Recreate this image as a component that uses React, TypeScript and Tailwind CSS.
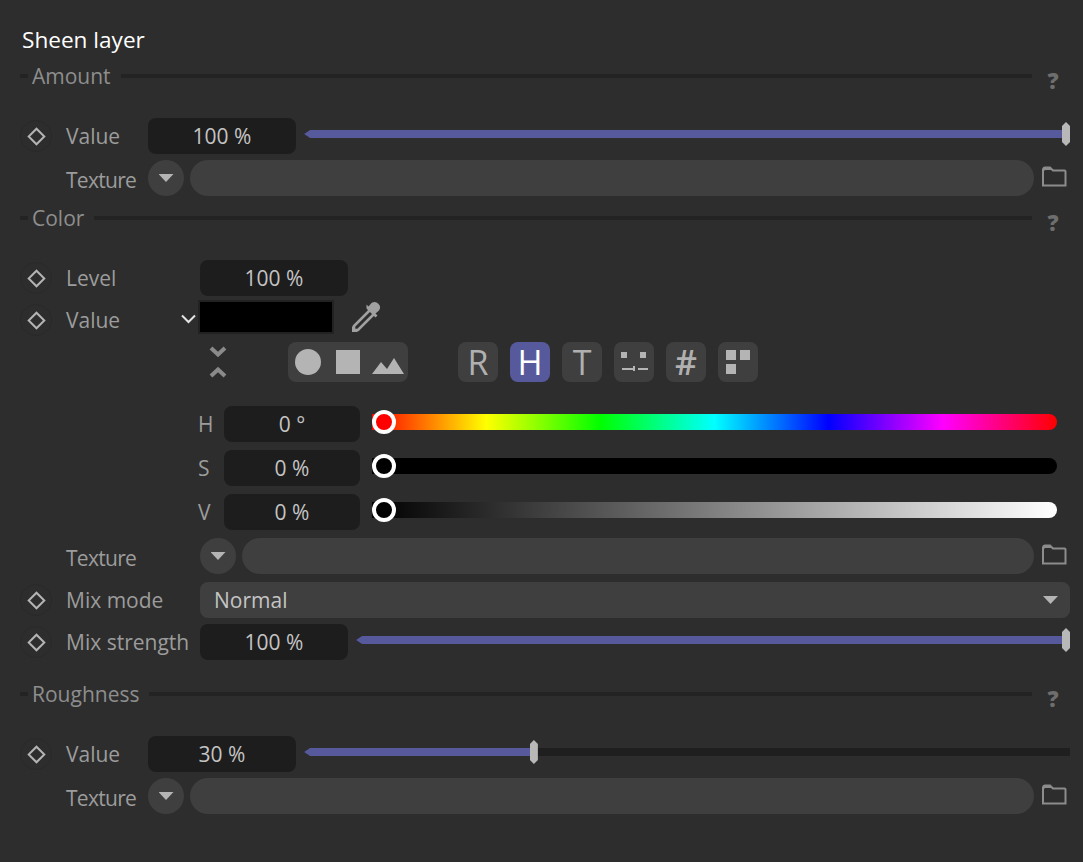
import type { ReactNode } from "react";

const font = { fontFamily: '"Open Sans", "Noto Sans", sans-serif' };

function Keyframe() {
  return (
    <div className="w-8 h-8 shrink-0 rounded-full border border-[#292929] flex items-center justify-center">
      <div className="w-[13px] h-[13px] rotate-45 border-2 border-[#b4b4b4]" />
    </div>
  );
}

function Folder() {
  return (
    <svg width="26" height="22" viewBox="0 0 26 22" className="shrink-0 ml-[7px]" fill="none">
      <path d="M2 20.5V4.500a2 2 0 0 1 2-2h5l3 3h11.500a1 1 0 0 1 1 1v14z" stroke="#8c8c8c" strokeWidth="2" />
      <path d="M2 7V4a2 2 0 0 1 2-2h5l3 3H4z" fill="#8c8c8c" />
    </svg>
  );
}

function Arrow() {
  return <div className="w-[15px] h-[8px] bg-[#b4b4b4] [clip-path:polygon(0_0,100%_0,50%_100%)]" />;
}

function Field({ value, w = "w-[148px]" }: { value: string; w?: string }) {
  return (
    <div className={"h-9 shrink-0 rounded-lg bg-[#1d1d1d] flex items-center justify-center text-[#c4c4c4] " + w}>
      {value}
    </div>
  );
}

function ValueSlider({ pct }: { pct: number }) {
  const left = `calc((100% - 8px) * ${pct / 100})`;
  return (
    <div className="relative flex-1 ml-2 -mt-1 h-2">
      <div className="h-full bg-[#1f1f1f] [clip-path:polygon(0_50%,6px_0,100%_0,100%_100%,6px_100%)]">
        <div className="h-full bg-[#565a9c]" style={{ width: left }} />
      </div>
      <div
        className="absolute top-[-8px] w-2 h-6 bg-[#b8b8b8] [clip-path:polygon(50%_0,100%_4px,100%_20px,50%_100%,0_20px,0_4px)]"
        style={{ left }}
      />
    </div>
  );
}

function Section({ title, className }: { title: string; className?: string }) {
  return (
    <div className={"h-7 flex items-center pr-[7px] " + (className ?? "")}>
      <div className="w-2 h-1 bg-[#232323]" />
      <span className="ml-1 mr-2.5 text-[#8e8e8e]">{title}</span>
      <div className="flex-1 h-1 bg-[#232323] mr-[11px]" />
      <span className="w-5 text-center mt-2 text-[#6e6e6e] font-extrabold text-[22px] leading-none">?</span>
    </div>
  );
}

function Row({ keyed, label, w, children, className }: { keyed?: boolean; label: string; w: string; children: ReactNode; className?: string }) {
  return (
    <div className={"h-9 flex items-center " + (className ?? "")}>
      <div className="w-8 shrink-0 flex justify-center">{keyed && <Keyframe />}</div>
      <span className={"ml-3.5 shrink-0 text-[#9c9c9c] " + w}>{label}</span>
      {children}
    </div>
  );
}

function TextureRow({ w, className }: { w: string; className?: string }) {
  return (
    <Row label="Texture" w={w + " mt-1 tracking-[-0.7px]"} className={className}>
      <div className="w-9 h-9 shrink-0 rounded-full bg-[#3f3f3f] flex items-center justify-center">
        <Arrow />
      </div>
      <div className="flex-1 h-9 ml-1.5 rounded-full bg-[#3f3f3f]" />
      <div className="-mt-1 mr-[3px]">
        <Folder />
      </div>
    </Row>
  );
}

function ToolButton({ active, children }: { active?: boolean; children: ReactNode }) {
  return (
    <div
      className={
        "w-10 h-10 rounded-lg flex items-center justify-center text-[34px] leading-none " +
        (active ? "bg-[#565a9c] text-white" : "bg-[#3f3f3f] text-[#b0b0b0]")
      }
    >
      {children}
    </div>
  );
}

function ColorBar({ letter, value, gradient, thumb }: { letter: string; value: string; gradient: string; thumb: string }) {
  return (
    <div className="h-9 flex items-center">
      <span className="w-[26px] text-[#9c9c9c]">{letter}</span>
      <Field value={value} w="w-[136px]" />
      <div className={"relative h-4 w-[685px] ml-3 rounded-r-full -mt-1 " + gradient}>
        <div className={"absolute left-0 top-[-4px] w-6 h-6 rounded-full border-4 border-white " + thumb} />
      </div>
    </div>
  );
}

export default function App() {
  return (
    <div style={font} className="w-[1083px] h-[862px] overflow-hidden bg-[#2d2d2d] pl-5 pr-[13px] pt-[26px] text-[21px] leading-7">
      <div className="h-7 pl-0.5 text-white text-[22.600px]">Sheen layer</div>

      <Section title="Amount" className="mt-2" />
      <Row keyed label="Value" w="w-[82px]" className="mt-7">
        <Field value="100 %" />
        <ValueSlider pct={100} />
      </Row>
      <TextureRow w="w-[82px]" className="mt-1.5" />

      <Section title="Color" className="mt-2" />
      <Row keyed label="Level" w="w-[134px]" className="mt-7">
        <Field value="100 %" />
      </Row>
      <Row keyed label="Value" w="w-[112px]" className="mt-1.5">
        <svg width="15" height="10" viewBox="0 0 15 10" fill="none" className="ml-[3px] mr-[2px] -mt-0.5 shrink-0">
          <path d="M1 1.500l6.500 6.500 6.500-6.500" stroke="#e4e4e4" strokeWidth="2" />
        </svg>
        <div className="w-[136px] h-[34px] -mt-1.5 border-2 border-[#222] bg-black shrink-0" />
        <svg width="32" height="32" viewBox="0 0 32 32" className="ml-[17px] -mt-1.5 shrink-0" fill="none">
          <path d="M19 9L3 25v4h4L23 13" stroke="#a0a0a0" strokeWidth="2.600" />
          <path d="M1 31v-6l6 6z" fill="#a0a0a0" />
          <path d="M15.500 7.500l9 9 2-2-2-2 3.500-3a5.400 5.400 0 0 0-7.500-7.500l-3 3.500-2-2z" fill="#a0a0a0" />
        </svg>
      </Row>

      <div className="h-10 mt-1 flex items-center">
        <svg width="20" height="34" viewBox="0 0 20 34" className="ml-[188px] shrink-0" fill="none" stroke="#8a8a8a" strokeWidth="4">
          <path d="M3 3l7 6.500 7-6.500" />
          <path d="M3 31l7-6.500 7 6.500" />
        </svg>
        <div className="w-[120px] h-10 ml-[60px] rounded-lg bg-[#3f3f3f] flex items-center shrink-0">
          <div className="w-[26px] h-[26px] ml-[7px] rounded-full bg-[#b4b4b4]" />
          <div className="w-6 h-6 ml-[15px] bg-[#b4b4b4]" />
          <svg width="32" height="16" viewBox="0 0 32 16" className="ml-3 mt-2 shrink-0">
            <path d="M0 16L9 4l6 7 7-11 10 16z" fill="#b4b4b4" />
          </svg>
        </div>
        <div className="flex gap-3 ml-[50px]">
          <ToolButton>R</ToolButton>
          <ToolButton active>H</ToolButton>
          <ToolButton>T</ToolButton>
          <ToolButton>
            <svg width="32" height="24" viewBox="0 0 32 24" fill="#b4b4b4">
              <rect x="3" y="2" width="6" height="6" />
              <rect x="22" y="2" width="6" height="6" />
              <rect x="4" y="18" width="11" height="2" />
              <rect x="15" y="16" width="2" height="5" />
              <rect x="20" y="18" width="10" height="2" />
            </svg>
          </ToolButton>
          <ToolButton>
            <span className="font-semibold">#</span>
          </ToolButton>
          <ToolButton>
            <svg width="24" height="24" viewBox="0 0 24 24" fill="#b4b4b4">
              <rect width="10" height="10" />
              <rect x="14" width="10" height="10" />
              <rect y="14" width="10" height="10" />
            </svg>
          </ToolButton>
        </div>
      </div>

      <div className="mt-6 ml-[178px] flex flex-col gap-2">
        <ColorBar letter="H" value="0 °" thumb="bg-[#ff0000]" gradient="bg-[linear-gradient(to_right,#f00,#ff0,#0f0,#0ff,#00f,#f0f,#f00)]" />
        <ColorBar letter="S" value="0 %" thumb="bg-black" gradient="bg-black" />
        <ColorBar letter="V" value="0 %" thumb="bg-black" gradient="bg-[linear-gradient(to_right,#000,#fff)]" />
      </div>

      <TextureRow w="w-[134px]" className="mt-2" />
      <Row keyed label="Mix mode" w="w-[134px]" className="mt-2">
        <div className="flex-1 h-9 rounded-lg bg-[#3f3f3f] flex items-center justify-between pl-3.5 pr-3 text-[#c4c4c4]">
          Normal
          <Arrow />
        </div>
      </Row>
      <Row keyed label="Mix strength" w="w-[134px]" className="mt-1.5">
        <Field value="100 %" />
        <ValueSlider pct={100} />
      </Row>

      <Section title="Roughness" className="mt-5" />
      <Row keyed label="Value" w="w-[82px]" className="mt-7">
        <Field value="30 %" />
        <ValueSlider pct={29.8} />
      </Row>
      <TextureRow w="w-[82px]" className="mt-1.5" />
    </div>
  );
}
